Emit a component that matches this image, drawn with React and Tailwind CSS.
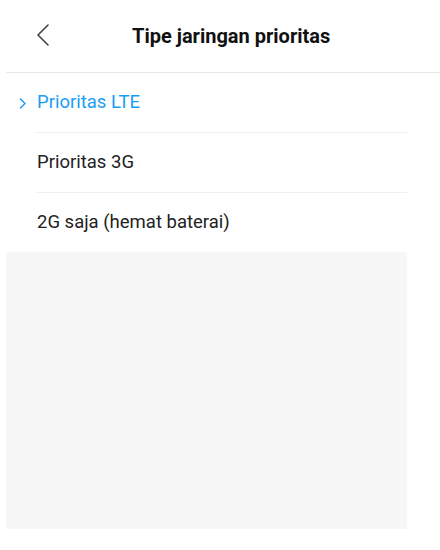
import React from 'react';

const options = [
  { label: 'Prioritas LTE', active: true },
  { label: 'Prioritas 3G' },
  { label: '2G saja (hemat baterai)' },
];

const App = () => {
  return (
    <div className="w-[440px] h-[550px] bg-white font-['Roboto',sans-serif] overflow-hidden">
      <div className="h-[72px] flex items-center">
        <button className="ml-[36px] mt-[-2px] w-[14px] h-[22px] text-[#444]">
          <svg width="14" height="22" viewBox="0 0 14 22" fill="none">
            <path d="M12 1 L2 11 L12 21" stroke="currentColor" strokeWidth="1.6" strokeLinecap="round" strokeLinejoin="round" />
          </svg>
        </button>
        <h1 className="ml-[82px] text-[20px] font-bold text-[#111] leading-none">Tipe jaringan prioritas</h1>
      </div>
      <div className="ml-[6px] h-px bg-[#e8e8e8]" />

      <ul>
        {options.map((o, i) => (
          <li key={o.label}>
            <div className="h-[59px] flex items-center relative">
              {o.active && (
                <svg className="absolute left-[19px] top-[25px]" width="8" height="11" viewBox="0 0 8 11" fill="none">
                  <path d="M1.5 1 L6 5.5 L1.5 10" stroke="#1c9cf6" strokeWidth="1.5" strokeLinecap="round" strokeLinejoin="round" />
                </svg>
              )}
              <span className={`ml-[37px] text-[18.5px] ${o.active ? 'text-[#1c9cf6]' : 'text-[#222]'}`}>{o.label}</span>
            </div>
            {i < options.length - 1 && <div className="ml-[36px] mr-[33px] h-px bg-[#f0f0f0]" />}
          </li>
        ))}
      </ul>

      <div className="ml-[6px] w-[401px] h-[277px] bg-[#f7f7f7]" />
    </div>
  );
};

export default App;
